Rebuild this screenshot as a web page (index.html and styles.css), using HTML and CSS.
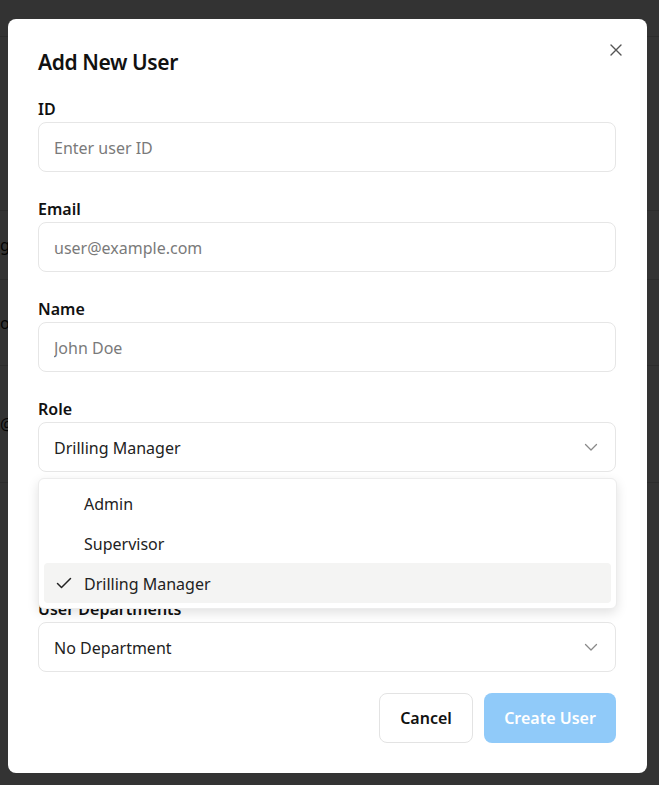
FILE: index.html
```html
<!DOCTYPE html>
<html lang="en">
<head>
<meta charset="utf-8">
<title>Add New User</title>
<link rel="stylesheet" href="styles.css">
</head>
<body>
<div class="page">
  <div class="prow prow-head"></div>
  <div class="prow prow-a"></div>
  <div class="prow prow-b"><a class="plink">g</a></div>
  <div class="prow prow-c"><span class="ptext">o</span></div>
  <div class="prow prow-d"><span class="ptext">@</span></div>
</div>

<div class="overlay">
  <div class="dialog" role="dialog" aria-labelledby="dlg-title">
    <h2 class="dialog-title" id="dlg-title">Add New User</h2>
    <button class="close-btn" aria-label="Close">
      <svg width="12" height="12" viewBox="0 0 12 12" fill="none" stroke="#555" stroke-width="1.4" stroke-linecap="round"><path d="M1 1l10 10M11 1L1 11"/></svg>
    </button>

    <form class="form">
      <div class="field">
        <label class="label">ID</label>
        <input class="input" type="text" placeholder="Enter user ID">
      </div>
      <div class="field">
        <label class="label">Email</label>
        <input class="input" type="text" placeholder="user@example.com">
      </div>
      <div class="field">
        <label class="label">Name</label>
        <input class="input" type="text" placeholder="John Doe">
      </div>
      <div class="field field-role">
        <label class="label">Role</label>
        <div class="select">
          <span class="select-value">Drilling Manager</span>
          <svg class="chev" width="16" height="16" viewBox="0 0 16 16" fill="none" stroke="#8a8a8a" stroke-width="1.3" stroke-linecap="round" stroke-linejoin="round"><path d="M2.5 5.5L8 11l5.5-5.5"/></svg>
        </div>
        <div class="menu" role="listbox">
          <div class="option">Admin</div>
          <div class="option">Supervisor</div>
          <div class="option option-selected">
            <svg class="check" width="16" height="16" viewBox="0 0 16 16" fill="none" stroke="#222" stroke-width="1.5" stroke-linecap="round" stroke-linejoin="round"><path d="M1.5 8.5l4 4 9-9"/></svg>
            Drilling Manager
          </div>
        </div>
      </div>
      <div class="field field-covered" aria-hidden="true">
        <div class="label-space"></div>
        <div class="select"></div>
      </div>
      <div class="field">
        <label class="label">User Departments</label>
        <div class="select">
          <span class="select-value">No Department</span>
          <svg class="chev" width="16" height="16" viewBox="0 0 16 16" fill="none" stroke="#8a8a8a" stroke-width="1.3" stroke-linecap="round" stroke-linejoin="round"><path d="M2.5 5.5L8 11l5.5-5.5"/></svg>
        </div>
      </div>
      <div class="actions">
        <button type="button" class="btn btn-cancel">Cancel</button>
        <button type="button" class="btn btn-create" disabled>Create User</button>
      </div>
    </form>
  </div>
</div>
</body>
</html>
```
FILE: styles.css
```css
* { box-sizing: border-box; }

html, body {
  margin: 0;
  padding: 0;
  height: 100%;
  background: #fff;
  font-family: "Noto Sans", "Open Sans", sans-serif;
  color: #111;
  overflow: hidden;
}

/* background page (dimmed) */
.page { width: 100%; }
.prow {
  border-bottom: 1px solid #dcdcdc;
  display: flex;
  align-items: center;
  font-size: 16px;
}
.prow-head { height: 37px; }
.prow-a { height: 174px; }
.prow-b { height: 69px; }
.prow-c { height: 86px; }
.prow-d { height: 117px; }
.plink { text-decoration: underline; color: #111; }

/* overlay */
.overlay {
  position: fixed;
  inset: 0;
  background: rgba(0, 0, 0, 0.8);
  padding: 19px 0 0 8px;
}

.dialog {
  position: relative;
  width: 639px;
  background: #fff;
  border-radius: 8px;
  padding: 30px 31px 30px 30px;
}

.dialog-title {
  margin: 0 0 21px;
  font-size: 21px;
  line-height: 27px;
  font-weight: 600;
  color: #111;
  letter-spacing: -0.4px;
}

.close-btn {
  position: absolute;
  top: 19px;
  right: 19px;
  width: 24px;
  height: 24px;
  padding: 0;
  border: 0;
  background: transparent;
  display: flex;
  align-items: center;
  justify-content: center;
}

.form {
  display: flex;
  flex-direction: column;
  gap: 26px;
  padding-top: 1px;
}

.field { position: relative; }

.label {
  display: block;
  font-size: 16px;
  line-height: 22px;
  font-weight: 600;
  color: #111;
  margin-bottom: 2px;
}
.label-space { height: 22px; margin-bottom: 2px; }

.input, .select {
  display: flex;
  align-items: center;
  width: 100%;
  height: 50px;
  border: 1px solid #e6e6e6;
  border-radius: 8px;
  padding: 2px 15px 0;
  font-family: inherit;
  font-size: 16px;
  color: #222;
  background: #fff;
  outline: none;
}
.input::placeholder { color: #7a7a7a; }

.select { justify-content: space-between; }
.select-value { color: #222; }
.chev { margin-right: 1px; margin-top: -2px; }

.menu {
  position: absolute;
  z-index: 5;
  top: 80px;
  left: 0;
  width: calc(100% + 1px);
  background: #fff;
  border: 1px solid #ececec;
  border-radius: 6px;
  box-shadow: 0 4px 12px rgba(0, 0, 0, 0.12);
  padding: 4px 5px 5px;
}

.option {
  position: relative;
  height: 40px;
  display: flex;
  align-items: center;
  padding-left: 40px;
  padding-top: 2px;
  font-size: 16px;
  color: #222;
  border-radius: 4px;
}
.option-selected { background: #f4f4f3; }
.check {
  position: absolute;
  left: 12px;
  top: 12px;
}

.actions {
  display: flex;
  justify-content: flex-end;
  gap: 11px;
  margin-top: -5px;
}

.btn {
  height: 50px;
  border-radius: 8px;
  font-family: inherit;
  font-size: 16px;
  font-weight: 600;
  padding: 0 20px;
}
.btn-cancel {
  background: #fff;
  border: 1px solid #e3e3e3;
  color: #111;
  width: 94px;
}
.btn-create {
  background: #90caf9;
  border: 0;
  color: #fff;
  width: 132px;
}
```
